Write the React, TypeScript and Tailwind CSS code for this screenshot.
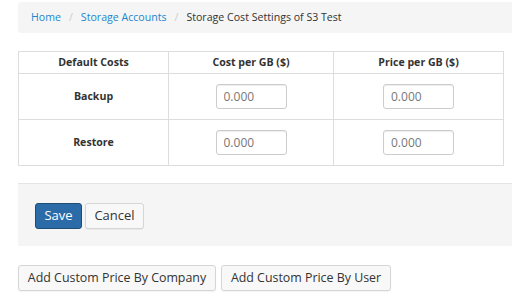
import React from "react";

const rows = ["Backup", "Restore"];

function PriceInput() {
  return (
    <input
      type="text"
      placeholder="0.000"
      className="h-[25px] w-[71px] rounded-[3px] border border-[#cccccc] bg-white px-[7px] text-[12px] text-[#555] placeholder:text-[#777] shadow-[inset_0_1px_1px_rgba(0,0,0,0.075)] outline-none"
    />
  );
}

export default function App() {
  return (
    <div
      className="h-[300px] w-[512px] overflow-hidden bg-white text-[10.6px] text-[#333]"
      style={{ fontFamily: '"Open Sans", "Noto Sans", sans-serif' }}
    >
      <div className="w-[540px] pl-[18px] pt-[2px]">
        {/* breadcrumb */}
        <ol className="flex h-[31px] items-center gap-[8px] rounded-[4px] bg-[#f5f5f5] pl-[13px]">
          <li className="text-[#1c87d0]">Home</li>
          <li className="text-[#cccccc]">/</li>
          <li className="text-[#1c87d0]">Storage Accounts</li>
          <li className="text-[#cccccc]">/</li>
          <li>Storage Cost Settings of S3 Test</li>
        </ol>

        {/* costs table */}
        <table className="mt-[18px] w-[486px] border-collapse border border-[#dddddd] text-center">
          <thead>
            <tr className="h-[22px]">
              <th className="w-[150px] border border-[#dddddd] font-bold">Default Costs</th>
              <th className="w-[165px] border border-[#dddddd] font-bold">Cost per GB ($)</th>
              <th className="border border-[#dddddd] font-bold">Price per GB ($)</th>
            </tr>
          </thead>
          <tbody>
            {rows.map((r) => (
              <tr key={r} className="h-[46px]">
                <td className="border border-[#dddddd] font-bold">{r}</td>
                <td className="border border-[#dddddd]">
                  <div className="flex justify-center">
                    <PriceInput />
                  </div>
                </td>
                <td className="border border-[#dddddd]">
                  <div className="flex justify-center">
                    <PriceInput />
                  </div>
                </td>
              </tr>
            ))}
          </tbody>
        </table>

        {/* form actions */}
        <div className="mt-[17px] flex h-[63px] items-center gap-[3px] border-t border-[#e5e5e5] bg-[#f5f5f5] pl-[17px] pt-[2px]">
          <button className="h-[26px] w-[47px] rounded-[3px] border border-[#204d74] bg-[#2b6ca8] text-[13px] text-white">
            Save
          </button>
          <button className="h-[26px] w-[59px] rounded-[3px] border border-[#d5d5d5] bg-[#f8f8f8] text-[13px] text-[#333] shadow-[0_1px_1px_rgba(0,0,0,0.05)]">
            Cancel
          </button>
        </div>

        {/* custom price buttons */}
        <div className="mt-[19px] flex gap-[5px]">
          <button className="h-[26px] w-[198px] rounded-[3px] border border-[#d5d5d5] bg-[#f8f8f8] text-[12.4px] text-[#333] shadow-[0_1px_1px_rgba(0,0,0,0.05)]">
            Add Custom Price By Company
          </button>
          <button className="h-[26px] w-[170px] rounded-[3px] border border-[#d5d5d5] bg-[#f8f8f8] text-[12.4px] text-[#333] shadow-[0_1px_1px_rgba(0,0,0,0.05)]">
            Add Custom Price By User
          </button>
        </div>
      </div>
    </div>
  );
}
